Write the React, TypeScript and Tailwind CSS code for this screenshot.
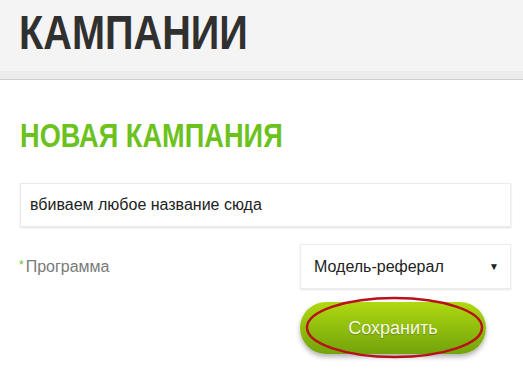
export default function App() {
  return (
    <div className="min-h-[374px] w-[523px] bg-white font-['Liberation_Sans',Arial,sans-serif]">
      {/* header band */}
      <div className="border-b border-[#cfcfcf] bg-[#ececec]">
        <div className="h-[71px] bg-[#f4f4f4] pl-[19px] pt-[7px]">
          <h1 className="inline-block origin-left scale-x-[0.81] text-[49px] font-bold leading-[50px] text-[#303030]">
            КАМПАНИИ
          </h1>
        </div>
        <div className="h-[8px]" />
      </div>

      <div className="pl-[20px] pr-[12px] pt-[35px]">
        <h2 className="inline-block origin-left scale-x-[0.8] text-[34px] font-bold leading-[40px] text-[#6cc21c]">
          НОВАЯ КАМПАНИЯ
        </h2>

        <div className="mt-[28px] flex h-[44px] w-[491px] items-center border border-[#ebebeb] px-[9px] text-[16px] text-[#222] shadow-[0_1px_2px_rgba(0,0,0,0.12)]">
          вбиваем любое название сюда
        </div>

        <div className="mt-[17px] flex items-center justify-between">
          <div className="-ml-[1px] flex items-start text-[16px] text-[#7a7a7a]">
            <span className="mr-[2px] mt-[3px] text-[12px] leading-[14px] text-[#6cc21c]">*</span>
            <span>Программа</span>
          </div>
          <div className="flex h-[45px] w-[211px] items-center justify-between border border-[#ededed] pl-[13px] pr-[11px] text-[16px] text-[#222] shadow-[0_1px_2px_rgba(0,0,0,0.1)]">
            <span>Модель-реферал</span>
            <span className="text-[10px]">▼</span>
          </div>
        </div>

        <div className="mt-[13px] flex justify-end pr-[25px]">
          <div className="relative">
            <button className="h-[52px] w-[186px] rounded-full bg-gradient-to-b from-[#b0d910] to-[#72a30b] text-[18px] text-[#f8f8e8] shadow-[0_3px_5px_rgba(0,0,0,0.3)] [text-shadow:0_1px_1px_rgba(0,0,0,0.25)]">
              Сохранить
            </button>
            <svg
              className="pointer-events-none absolute left-[5px] top-[-6px]"
              width="180"
              height="64"
              viewBox="0 0 180 64"
            >
              <ellipse cx="89.5" cy="31.5" rx="87.5" ry="29.5" fill="none" stroke="#b8111b" strokeWidth="2.5" />
            </svg>
          </div>
        </div>
      </div>
    </div>
  );
}
